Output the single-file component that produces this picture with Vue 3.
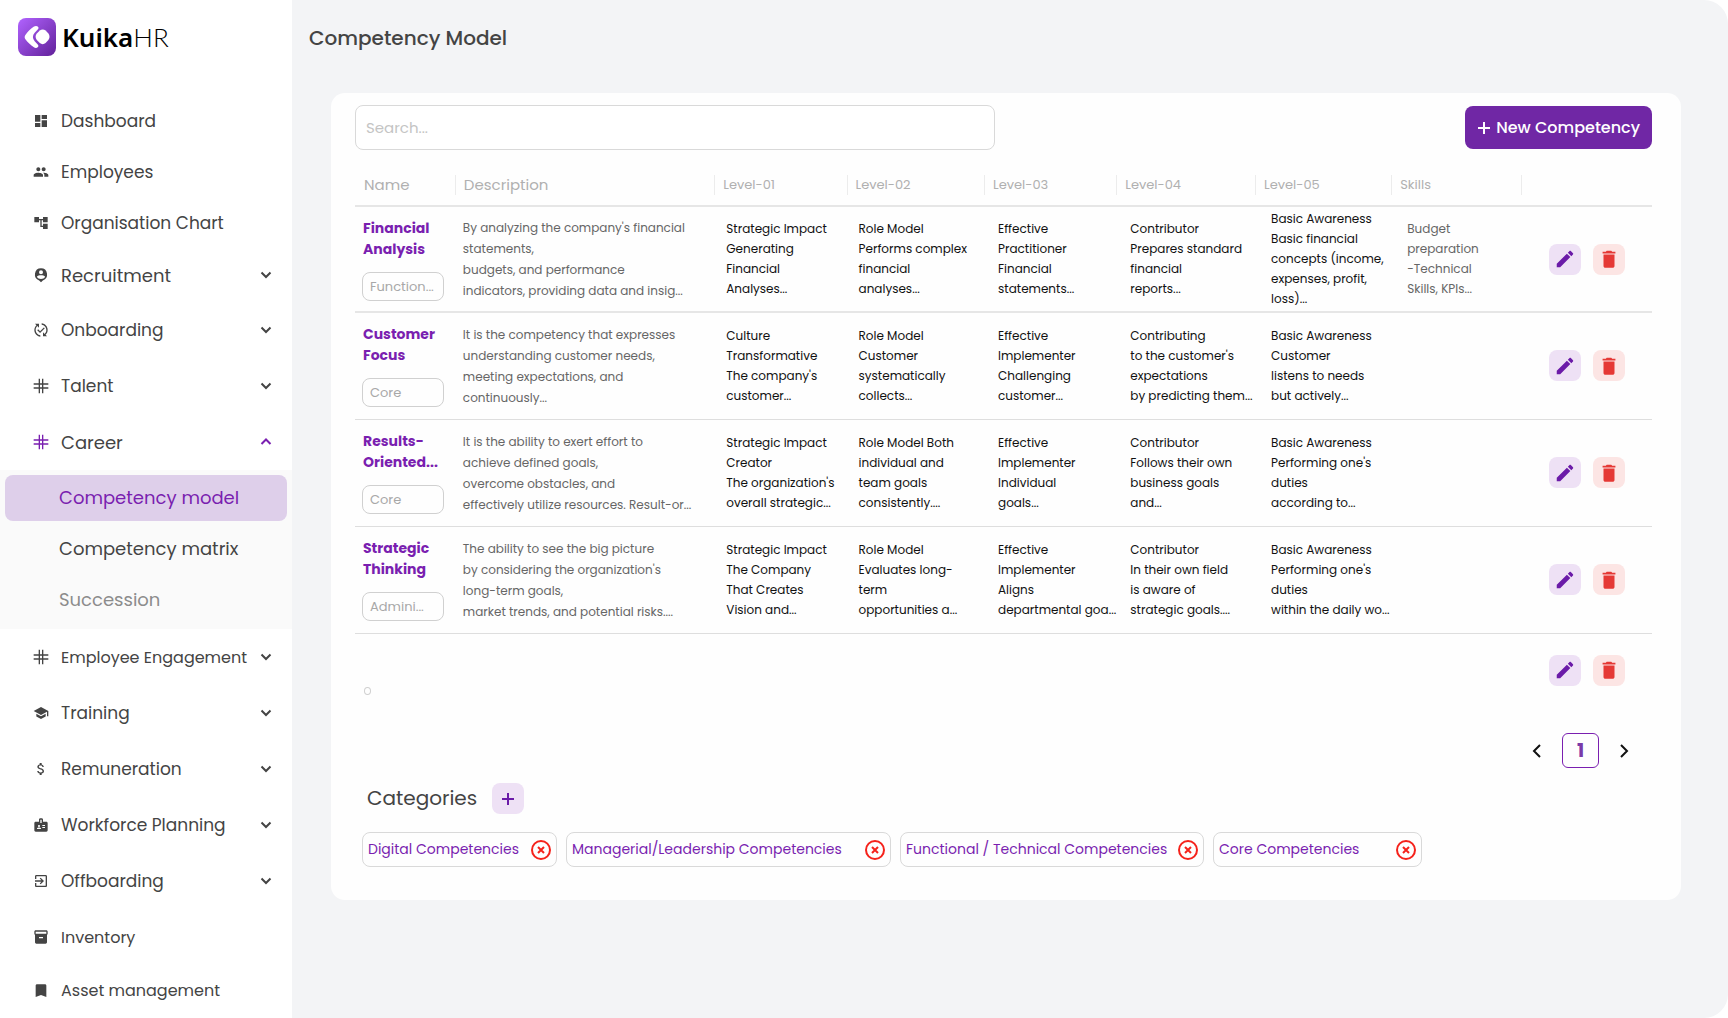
<template>
  <div class="layout">
    <!-- sidebar -->
    <aside class="sidebar">
      <a href="#" class="logo">
        <svg class="logo-mark" viewBox="0 0 38 38">
          <defs>
            <linearGradient id="logoBg" x1="0" y1="0" x2="1" y2="1">
              <stop offset="0" stop-color="#b163ff" />
              <stop offset="1" stop-color="#62219a" />
            </linearGradient>
          </defs>
          <rect width="38" height="38" rx="8" fill="url(#logoBg)" />
          <path
            d="M16 8.600c1.600-1 3.400-.6 4.200.5.6.9.3 1.700-.5 2.500l-3 3.200c-2.400 2.600-2.400 5.800 0 8.400l2.800 3c1 1 1.200 2 .4 2.900-.9 1-2.600 1.200-4 .2-3.300-2.300-6.300-5-8.500-8-1-1.400-1-3 0-4.400 2.300-3.200 5.300-6 8.600-8.300z"
            fill="#fff"
          />
          <path
            d="M21.800 12.600c1.700-1.500 4.100-1.500 5.800 0l2.800 3c1.500 1.900 1.500 4.500 0 6.400l-2.800 3c-1.700 1.500-4.100 1.500-5.800 0l-3-3c-1.600-1.900-1.600-4.500 0-6.400z"
            fill="#fff"
          />
        </svg>
        <span class="logo-text"><b>Kuika</b><span>HR</span></span>
      </a>

      <nav>
        <ul class="menu">
          <li v-for="item in menu" :key="item.label">
            <component
              :is="item.expandable ? 'button' : 'a'"
              :href="item.expandable ? undefined : '#'"
              class="menu-item"
              :class="[item.size, { tall: item.tall, open: item.children }]"
            >
              <svg class="menu-icon" viewBox="0 0 24 24">
                <path :d="icons[item.icon]" fill-rule="evenodd" />
              </svg>
              <span class="menu-label">{{ item.label }}</span>
              <svg v-if="item.expandable" class="menu-chevron" viewBox="0 0 12 12">
                <path :d="item.children ? 'M1.500 8L6 3.500 10.500 8' : 'M1.500 3.500L6 8l4.500-4.500'" />
              </svg>
            </component>

            <ul v-if="item.children" class="submenu">
              <li v-for="child in item.children" :key="child.label">
                <a href="#" class="submenu-item" :class="child.state">{{ child.label }}</a>
              </li>
            </ul>
          </li>
        </ul>
      </nav>
    </aside>
    <!-- sidebar -->

    <!-- content -->
    <main class="content">
      <h1 class="page-title">Competency Model</h1>

      <section class="card">
        <div class="toolbar">
          <input v-model="keyword" class="search" type="text" placeholder="Search..." aria-label="Search" />
          <button class="new-button">
            <svg class="plus" viewBox="0 0 14 14"><path d="M7 1v12M1 7h12" /></svg>
            New Competency
          </button>
        </div>

        <table class="table">
          <colgroup>
            <col v-for="(column, index) in columns" :key="index" :style="{ width: column.width + '%' }" />
          </colgroup>
          <thead>
            <tr>
              <th v-for="(column, index) in columns" :key="index">
                <div class="head-label" :class="{ large: index < 2 }">{{ column.label }}</div>
              </th>
            </tr>
          </thead>
          <tbody>
            <tr v-for="row in rows" :key="row.name">
              <td class="cell-name">
                <div class="name">{{ row.name }}</div>
                <div class="tag">{{ row.tag }}</div>
              </td>
              <td class="cell-desc">{{ row.desc }}</td>
              <td v-for="(level, index) in row.levels" :key="index" class="cell-level">{{ level }}</td>
              <td class="cell-skills">{{ row.skills }}</td>
              <td>
                <div class="actions">
                  <button class="icon-button" :aria-label="'Edit ' + row.name">
                    <svg viewBox="0 0 24 24"><path :d="icons.edit" /></svg>
                  </button>
                  <button class="icon-button danger" :aria-label="'Delete ' + row.name">
                    <svg viewBox="0 0 24 24"><path :d="icons.trash" /></svg>
                  </button>
                </div>
              </td>
            </tr>
            <tr class="empty-row">
              <td colspan="8"><div class="empty-tag"></div></td>
              <td>
                <div class="actions">
                  <button class="icon-button" aria-label="Edit">
                    <svg viewBox="0 0 24 24"><path :d="icons.edit" /></svg>
                  </button>
                  <button class="icon-button danger" aria-label="Delete">
                    <svg viewBox="0 0 24 24"><path :d="icons.trash" /></svg>
                  </button>
                </div>
              </td>
            </tr>
          </tbody>
        </table>

        <!-- pagination -->
        <div class="pagination">
          <button class="page-arrow" aria-label="Previous page">
            <svg viewBox="0 0 10 16"><path d="M8 2L2 8l6 6" /></svg>
          </button>
          <button class="page-number">1</button>
          <button class="page-arrow" aria-label="Next page">
            <svg viewBox="0 0 10 16"><path d="M2 2l6 6-6 6" /></svg>
          </button>
        </div>

        <!-- categories -->
        <div class="categories-head">
          <h2>Categories</h2>
          <button class="icon-button" aria-label="Add category">
            <svg class="plus" viewBox="0 0 14 14"><path d="M7 1v12M1 7h12" /></svg>
          </button>
        </div>
        <ul class="chips">
          <li v-for="category in categories" :key="category.label" class="chip" :style="{ width: category.width + 'px' }">
            {{ category.label }}
            <button class="chip-remove" :aria-label="'Remove ' + category.label">
              <svg viewBox="0 0 20 20">
                <circle cx="10" cy="10" r="9" />
                <path d="M7 7l6 6M13 7l-6 6" />
              </svg>
            </button>
          </li>
        </ul>
      </section>
    </main>
    <!-- content -->
  </div>
</template>

<script setup>
import { ref } from "vue";

const keyword = ref("");

// icons
const icons = {
  dashboard: "M3 13h8V3H3v10zm0 8h8v-6H3v6zm10 0h8V11h-8v10zm0-18v6h8V3h-8z",
  people:
    "M16 11c1.660 0 2.990-1.340 2.990-3S17.660 5 16 5s-3 1.340-3 3 1.340 3 3 3zm-8 0c1.660 0 2.990-1.340 2.990-3S9.660 5 8 5 5 6.340 5 8s1.340 3 3 3zm0 2c-2.330 0-7 1.170-7 3.500V19h14v-2.500c0-2.330-4.670-3.500-7-3.500zm8 0c-.29 0-.62.02-.97.05 1.160.84 1.970 1.970 1.970 3.450V19h6v-2.500c0-2.330-4.670-3.500-7-3.500z",
  tree: "M22 11V3h-7v3H9V3H2v8h7V8h2v10h4v3h7v-8h-7v3h-2V8h2v3z",
  person:
    "M12 2a9.300 9.300 0 0 0-2.800 18.100L12 22.800l2.800-2.700A9.300 9.300 0 0 0 12 2zM12 5a3 3 0 1 1 0 6 3 3 0 0 1 0-6zM5.800 14.500C6.800 13 9.800 12.300 12 12.300s5.200.7 6.200 2.200c-1.200 2-3.500 3.400-6.200 3.400s-5-1.400-6.200-3.400z",
  sync: "M17.660 9.530l-7.070 7.070-4.240-4.240 1.410-1.410 2.830 2.830 5.660-5.660 1.410 1.410zM4 12c0-2.330 1.020-4.420 2.620-5.880L9 8.500v-6H3l2.200 2.200C3.240 6.520 2 9.110 2 12c0 5.190 3.950 9.450 9 9.950v-2.020c-3.940-.49-7-3.860-7-7.930zm18 0c0-5.190-3.950-9.450-9-9.950v2.020c3.940.49 7 3.860 7 7.930 0 2.330-1.020 4.420-2.620 5.880L15 15.500v6h6l-2.200-2.200c1.960-1.820 3.200-4.410 3.200-7.300z",
  hash: "M8.500 1h2v7h3V1h2v7H23v2h-7.500v4H23v2h-7.500v7h-2v-7h-3v7h-2v-7H1v-2h7.500v-4H1V8h7.500V1zm2 9v4h3v-4h-3z",
  school: "M5 13.180v4L12 21l7-3.820v-4L12 17l-7-3.820zM12 3L1 9l11 6 9-4.910V17h2V9L12 3z",
  money:
    "M11.800 10.900c-2.270-.59-3-1.200-3-2.150 0-1.090 1.010-1.850 2.700-1.850 1.780 0 2.440.85 2.500 2.100h2.210c-.07-1.720-1.120-3.300-3.210-3.810V3h-3v2.160c-1.940.42-3.500 1.680-3.500 3.610 0 2.310 1.910 3.460 4.700 4.130 2.500.6 3 1.480 3 2.410 0 .69-.49 1.790-2.700 1.790-2.060 0-2.870-.92-2.980-2.100h-2.200c.12 2.190 1.760 3.420 3.680 3.830V21h3v-2.150c1.950-.37 3.500-1.500 3.500-3.550 0-2.840-2.430-3.810-4.700-4.400z",
  badge:
    "M20 7h-5V4c0-1.100-.9-2-2-2h-2c-1.100 0-2 .9-2 2v3H4c-1.100 0-2 .9-2 2v11c0 1.100.9 2 2 2h16c1.100 0 2-.9 2-2V9c0-1.100-.9-2-2-2zM9 12c.83 0 1.500.67 1.500 1.500S9.830 15 9 15s-1.500-.67-1.500-1.500S8.170 12 9 12zm3 6H6v-.75c0-1 2-1.500 3-1.500s3 .5 3 1.500V18zm1-9h-2V4h2v5zm5 7.500h-4V15h4v1.500zm0-3h-4V12h4v1.500z",
  exit: "M10.090 15.590L11.500 17l5-5-5-5-1.410 1.410L12.670 11H3v2h9.670l-2.580 2.590zM19 3H5c-1.110 0-2 .9-2 2v4h2V5h14v14H5v-4H3v4c0 1.100.89 2 2 2h14c1.100 0 2-.9 2-2V5c0-1.100-.9-2-2-2z",
  inventory:
    "M20 2H4c-1 0-2 .9-2 2v3.010c0 .72.43 1.340 1 1.690V20c0 1.100 1.100 2 2 2h14c.9 0 2-.9 2-2V8.700c.57-.35 1-.97 1-1.690V4c0-1.100-1-2-2-2zm-5 12H9v-2h6v2zm5-7H4V4h16v3z",
  bookmark: "M18 2H6c-1.100 0-2 .9-2 2v17l8-3 8 3V4c0-1.100-.9-2-2-2z",
  edit: "M3 17.250V21h3.750L17.810 9.940l-3.750-3.750L3 17.250zM20.710 7.040c.39-.39.39-1.020 0-1.410l-2.340-2.340c-.39-.39-1.020-.39-1.410 0l-1.830 1.830 3.750 3.750 1.830-1.830z",
  trash: "M6 19.500c0 1.100.9 2 2 2h8c1.100 0 2-.9 2-2V7H6v12.500zM19 4h-3.500l-1-1h-5l-1 1H5v2h14V4z",
};

// menu
const menu = [
  { label: "Dashboard", icon: "dashboard" },
  { label: "Employees", icon: "people" },
  { label: "Organisation Chart", icon: "tree" },
  { label: "Recruitment", icon: "person", expandable: true, size: "large" },
  { label: "Onboarding", icon: "sync", expandable: true, tall: true },
  { label: "Talent", icon: "hash", expandable: true, tall: true },
  {
    label: "Career",
    icon: "hash",
    expandable: true,
    tall: true,
    size: "large",
    children: [
      { label: "Competency model", state: "active" },
      { label: "Competency matrix", state: "" },
      { label: "Succession", state: "muted" },
    ],
  },
  { label: "Employee Engagement", icon: "hash", expandable: true, tall: true, size: "small" },
  { label: "Training", icon: "school", expandable: true, tall: true },
  { label: "Remuneration", icon: "money", expandable: true, tall: true },
  { label: "Workforce Planning", icon: "badge", expandable: true, tall: true },
  { label: "Offboarding", icon: "exit", expandable: true, tall: true },
  { label: "Inventory", icon: "inventory", tall: true, size: "small" },
  { label: "Asset management", icon: "bookmark", size: "small" },
];

// table
const columns = [
  { label: "Name", width: 7.7 },
  { label: "Description", width: 20 },
  { label: "Level-01", width: 10.2 },
  { label: "Level-02", width: 10.6 },
  { label: "Level-03", width: 10.2 },
  { label: "Level-04", width: 10.7 },
  { label: "Level-05", width: 10.5 },
  { label: "Skills", width: 10 },
  { label: "", width: 10.1 },
];
const rows = [
  {
    name: "Financial\nAnalysis",
    tag: "Function...",
    desc: "By analyzing the company's financial\nstatements,\nbudgets, and performance\nindicators, providing data and insig...",
    levels: [
      "Strategic Impact\nGenerating\nFinancial\nAnalyses...",
      "Role Model\nPerforms complex\nfinancial\nanalyses...",
      "Effective\nPractitioner\nFinancial\nstatements...",
      "Contributor\nPrepares standard\nfinancial\nreports...",
      "Basic Awareness\nBasic financial\nconcepts (income,\nexpenses, profit,\nloss)...",
    ],
    skills: "Budget\npreparation\n-Technical\nSkills, KPIs...",
  },
  {
    name: "Customer\nFocus",
    tag: "Core",
    desc: "It is the competency that expresses\nunderstanding customer needs,\nmeeting expectations, and\ncontinuously...",
    levels: [
      "Culture\nTransformative\nThe company's\ncustomer...",
      "Role Model\nCustomer\nsystematically\ncollects...",
      "Effective\nImplementer\nChallenging\ncustomer...",
      "Contributing\nto the customer's\nexpectations\nby predicting them...",
      "Basic Awareness\nCustomer\nlistens to needs\nbut actively...",
    ],
    skills: "",
  },
  {
    name: "Results-\nOriented...",
    tag: "Core",
    desc: "It is the ability to exert effort to\nachieve defined goals,\novercome obstacles, and\neffectively utilize resources. Result-or...",
    levels: [
      "Strategic Impact\nCreator\nThe organization's\noverall strategic...",
      "Role Model Both\nindividual and\nteam goals\nconsistently....",
      "Effective\nImplementer\nIndividual\ngoals...",
      "Contributor\nFollows their own\nbusiness goals\nand...",
      "Basic Awareness\nPerforming one's\nduties\naccording to...",
    ],
    skills: "",
  },
  {
    name: "Strategic\nThinking",
    tag: "Admini...",
    desc: "The ability to see the big picture\nby considering the organization's\nlong-term goals,\nmarket trends, and potential risks....",
    levels: [
      "Strategic Impact\nThe Company\nThat Creates\nVision and...",
      "Role Model\nEvaluates long-\nterm\nopportunities a...",
      "Effective\nImplementer\nAligns\ndepartmental goa...",
      "Contributor\nIn their own field\nis aware of\nstrategic goals....",
      "Basic Awareness\nPerforming one's\nduties\nwithin the daily wo...",
    ],
    skills: "",
  },
];

// categories
const categories = [
  { label: "Digital Competencies", width: 195 },
  { label: "Managerial/Leadership Competencies", width: 325 },
  { label: "Functional / Technical Competencies", width: 304 },
  { label: "Core Competencies", width: 209 },
];
</script>

<style>
body {
  margin: 0;
  background-color: #fff;
}
</style>

<style scoped>
/* layout */
.layout {
  display: flex;
  min-height: 100vh;
  color: #444;
  font-family: Poppins, Inter, sans-serif;
}
.layout * {
  box-sizing: border-box;
}
button {
  padding: 0;
  border: none;
  background: none;
  color: inherit;
  font-family: inherit;
  cursor: pointer;
}
ul {
  margin: 0;
  padding: 0;
  list-style: none;
}
a {
  color: inherit;
  text-decoration: none;
}

/* sidebar */
.sidebar {
  flex: 0 0 292px;
  background-color: #fff;
}
.logo {
  display: flex;
  align-items: center;
  gap: 6px;
  height: 95px;
  padding: 0 18px 21px 18px;
}
.logo-mark {
  width: 38px;
  height: 38px;
}
.logo-text {
  color: #000;
  font-family: "Noto Sans", sans-serif;
  font-size: 26px;
  line-height: 38px;
}
.logo-text b {
  font-weight: 600;
}
.logo-text span {
  font-family: Lato, sans-serif;
  font-weight: 300;
}
.menu-item {
  display: flex;
  align-items: center;
  width: 100%;
  height: 51px;
  padding: 0 20px 0 33px;
  font-size: 17px;
  text-align: left;
}
.menu-item.large {
  height: 54px;
  font-size: 18px;
}
.menu-item.small {
  font-size: 16px;
}
.menu-item.tall {
  height: 56px;
}
.menu-icon {
  flex: none;
  width: 16px;
  height: 16px;
  margin-right: 12px;
  fill: #444;
}
.menu-label {
  flex: 1;
  white-space: nowrap;
}
.menu-chevron {
  flex: none;
  width: 12px;
  height: 12px;
  fill: none;
  stroke: #444;
  stroke-width: 2;
}
.menu-item.open .menu-icon {
  fill: #7a1fb0;
}
.menu-item.open .menu-chevron {
  stroke: #7a1fb0;
}
.submenu {
  display: flex;
  flex-direction: column;
  gap: 5px;
  padding: 5px 5px 6px 5px;
  background-color: #fafafa;
}
.submenu-item {
  display: block;
  padding-left: 54px;
  border-radius: 8px;
  font-size: 18px;
  line-height: 46px;
}
.submenu-item.active {
  background-color: #decfea;
  color: #7a1fb0;
}
.submenu-item.muted {
  color: #8c8c8c;
}

/* content */
.content {
  flex: 1;
  min-width: 0;
  padding: 0 47px 118px 39px;
  border-radius: 0 24px 24px 0;
  background-color: #f3f4f6;
}
.page-title {
  margin: 0 0 0 -22px;
  padding: 24px 0 41px 0;
  font-size: 20px;
  font-weight: 500;
  line-height: 28px;
}
.card {
  padding: 12px 29px 33px 24px;
  border-radius: 14px;
  background-color: #fefefe;
}

/* toolbar */
.toolbar {
  display: flex;
  align-items: center;
  justify-content: space-between;
  gap: 24px;
}
.search {
  flex: 0 1 640px;
  min-width: 0;
  height: 45px;
  padding: 0 10px;
  border: 1px solid #d9d9d9;
  border-radius: 8px;
  background-color: #fff;
  font-family: inherit;
  font-size: 15px;
}
.search::placeholder {
  color: #c4c4c4;
}
.new-button {
  display: flex;
  align-items: center;
  justify-content: center;
  gap: 5px;
  height: 43px;
  padding: 0 12px;
  border-radius: 8px;
  background-color: #7027a5;
  color: #fff;
  font-size: 16px;
  font-weight: 500;
  white-space: nowrap;
}
.plus {
  width: 14px;
  height: 14px;
  fill: none;
  stroke: currentColor;
  stroke-width: 2;
}

/* table */
.table {
  width: 100%;
  margin-top: 15px;
  border-collapse: collapse;
  table-layout: fixed;
}
th {
  height: 41px;
  padding: 0;
  border-bottom: 2px solid #e6e6e6;
  font-weight: 400;
  text-align: left;
}
.head-label {
  height: 20px;
  padding-left: 8px;
  border-left: 1px solid #ececec;
  color: #b0b0b0;
  font-size: 13px;
  line-height: 20px;
}
.head-label.large {
  font-size: 15px;
}
th:first-child .head-label {
  border-left-color: transparent;
}
td {
  height: 107px;
  padding: 0;
  border-bottom: 1px solid #dedede;
  font-size: 12px;
  line-height: 20px;
  vertical-align: middle;
  white-space: pre;
}
tbody tr:first-child td {
  height: 106px;
  border-bottom: 2px solid #e6e6e6;
}
.name {
  padding-left: 8px;
  color: #7a1fb0;
  font-size: 14px;
  font-weight: 700;
  line-height: 21px;
}
.tag {
  width: 82px;
  height: 29px;
  margin: 12px 0 0 7px;
  padding-left: 7px;
  border: 1px solid #d0d0d0;
  border-radius: 8px;
  color: #a8a8a8;
  font-size: 13px;
  line-height: 27px;
}
.cell-desc {
  padding-left: 8px;
  color: #666;
  line-height: 21px;
}
.cell-level {
  padding-left: 12px;
  color: #111;
}
.cell-level:nth-child(5),
.cell-level:nth-child(6) {
  padding-left: 14px;
}
.cell-level:nth-child(7) {
  padding-left: 16px;
}
.cell-skills {
  padding-left: 16px;
  color: #666;
}
.actions {
  display: flex;
  gap: 12px;
  padding-left: 28px;
}
.icon-button {
  display: flex;
  align-items: center;
  justify-content: center;
  width: 32px;
  height: 31px;
  border-radius: 8px;
  background-color: #eee1f5;
  color: #6b1ba8;
}
.icon-button.danger {
  background-color: #fce5e4;
  color: #e53935;
}
.icon-button svg {
  width: 22px;
  height: 22px;
  fill: currentColor;
}
.icon-button .plus {
  width: 14px;
  height: 14px;
}
.empty-row td {
  height: 74px;
  border-bottom: none;
}
.empty-tag {
  width: 7px;
  height: 8px;
  margin: 42px 0 0 9px;
  border: 1px solid #d0d0d0;
  border-radius: 50%;
}

/* pagination */
.pagination {
  display: flex;
  align-items: center;
  justify-content: flex-end;
  gap: 20px;
  margin-top: 26px;
  padding-right: 23px;
}
.page-arrow {
  display: flex;
}
.page-arrow svg {
  width: 10px;
  height: 16px;
  fill: none;
  stroke: #111;
  stroke-width: 2;
}
.page-number {
  width: 37px;
  height: 35px;
  border: 1px solid #7a1fb0;
  border-radius: 6px;
  color: #7a3aa8;
  font-size: 19px;
  font-weight: 700;
}

/* categories */
.categories-head {
  display: flex;
  align-items: center;
  gap: 15px;
  margin-top: 15px;
  padding-left: 12px;
}
.categories-head h2 {
  margin: 0;
  font-size: 20px;
  font-weight: 400;
  line-height: 31px;
}
.chips {
  display: flex;
  flex-wrap: wrap;
  gap: 9px;
  margin-top: 18px;
  padding-left: 7px;
}
.chip {
  display: flex;
  align-items: center;
  justify-content: space-between;
  height: 35px;
  padding: 0 5px;
  border: 1px solid #d9d9d9;
  border-radius: 8px;
  color: #7a1fb0;
  font-size: 14px;
  white-space: nowrap;
}
.chip-remove {
  display: flex;
}
.chip-remove svg {
  width: 20px;
  height: 20px;
  fill: none;
  stroke: #f5221b;
  stroke-width: 2;
}
</style>
